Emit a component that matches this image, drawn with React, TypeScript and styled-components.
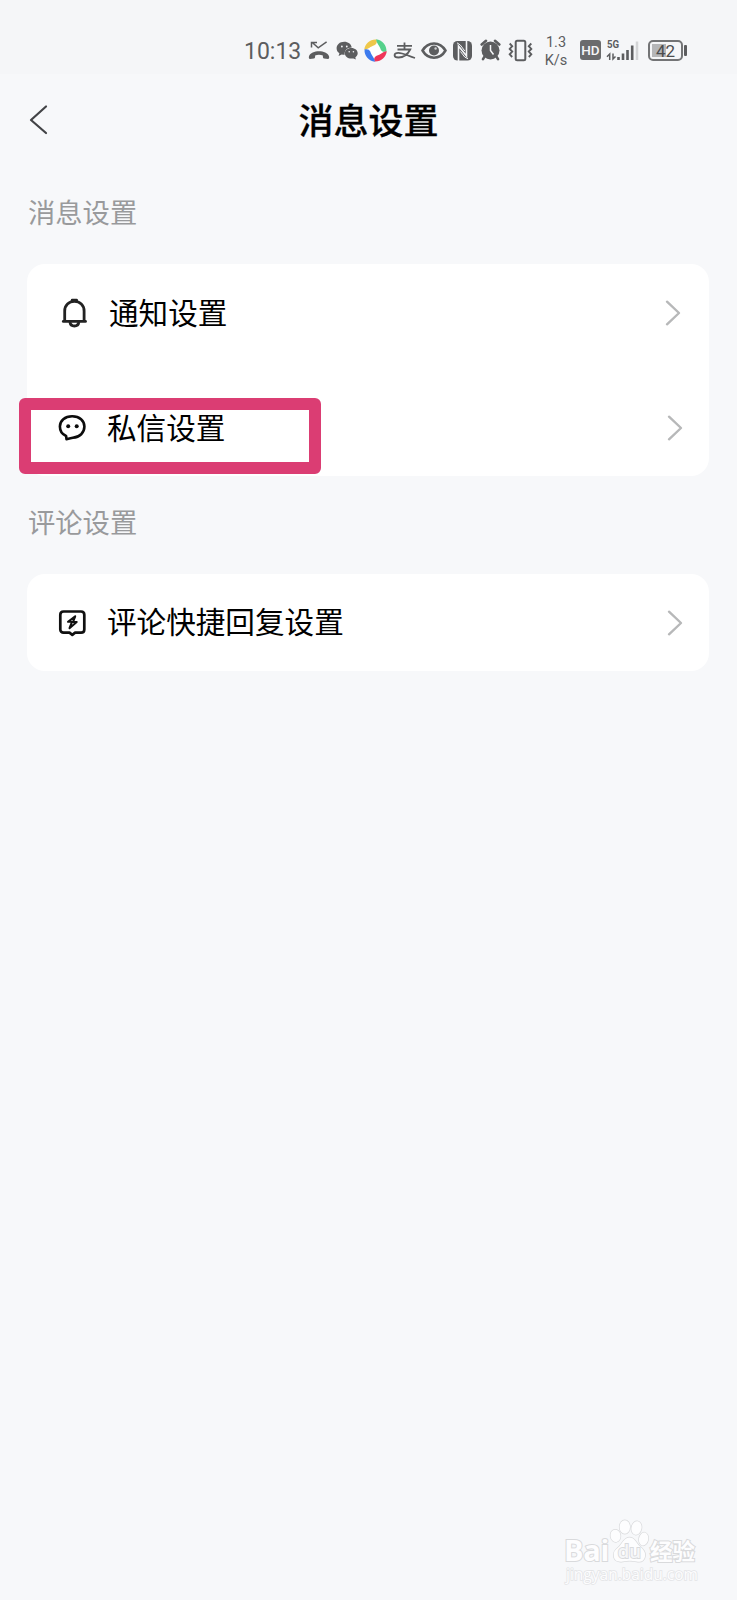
import React from 'react';
import styled, { createGlobalStyle } from 'styled-components';

const GlobalStyle = createGlobalStyle`
  * { box-sizing: border-box; }
  body {
    margin: 0;
    background: #f7f8fa;
    font-family: Roboto, "Noto Sans CJK SC", sans-serif;
    color: #000;
  }
`;

const Screen = styled.div`
  position: relative;
  width: 737px;
  height: 1600px;
  overflow: hidden;
  background: #f7f8fa;
`;

const StatusBar = styled.div`
  display: flex;
  align-items: flex-start;
  height: 74px;
  padding: 39px 0 0 244px;
  background: #f5f6f8;
  color: #5c5d5f;
`;

const Clock = styled.span`
  width: 57px;
  height: 24px;
  padding-top: 1px;
  font: 400 23px/24px Roboto, sans-serif;
  white-space: nowrap;
`;

const StatusIcon = styled.svg<{ $gap: number }>`
  display: block;
  flex: none;
  margin-left: ${(p) => p.$gap}px;
`;

const Speed = styled.span`
  width: 26px;
  margin: -5px 0 0 9px;
  font: 400 14.5px/18px Roboto, sans-serif;
  text-align: center;
`;

const HdBadge = styled.span`
  width: 21px;
  height: 20px;
  margin: 1px 0 0 11px;
  border-radius: 3px;
  background: #6a6b6d;
  color: #f5f6f8;
  font: 500 13.5px/20px Roboto, sans-serif;
  text-align: center;
`;

const Network = styled.div`
  position: relative;
  width: 34px;
  margin-left: 5px;
`;

const NetworkLabel = styled.span`
  position: absolute;
  top: 0;
  left: 1px;
  font: 700 11px/11px Roboto, sans-serif;
  transform: scaleX(0.88);
  transform-origin: left;
`;

const Battery = styled.div`
  position: relative;
  width: 35px;
  height: 21px;
  margin: 1px 0 0 8px;
  border: 2px solid #737476;
  border-radius: 5px;
  background: linear-gradient(90deg, #b5b6b8 14px, transparent 14px) 2px 2px / 27px 13px no-repeat;
  font: 400 17px/18px Roboto, sans-serif;
  text-align: center;
  color: #4c4d4f;

  &::after {
    content: '';
    position: absolute;
    top: 3px;
    right: -6px;
    width: 3px;
    height: 11px;
    border-radius: 1px;
    background: #5c5d5f;
  }
`;

const Header = styled.header`
  display: grid;
  grid-template-columns: 58px 1fr 58px;
  align-items: center;
  height: 92px;
`;

const BackButton = styled.button`
  display: flex;
  padding: 0 0 0 27px;
  border: 0;
  background: none;
`;

const Title = styled.h1`
  margin: 0;
  padding-bottom: 3px;
  font: 500 35px/48px "Noto Sans CJK SC", sans-serif;
  -webkit-text-stroke: 0.3px #000;
  text-align: center;
`;

const SectionTitle = styled.h2`
  margin: 0;
  padding: 25px 0 33px 28px;
  font: 400 27.3px/40px "Noto Sans CJK SC", sans-serif;
  color: #999a9c;
`;

const Card = styled.section`
  display: flex;
  flex-direction: column;
  gap: 18px;
  margin: 0 28px 0 27px;
  border-radius: 18px;
  background: #fff;
`;

const Row = styled.div<{ $height: number; $inset?: number }>`
  display: flex;
  align-items: center;
  height: ${(p) => p.$height}px;
  padding: 0 ${(p) => 25.5 + (p.$inset ?? 0)}px 0 ${(p) => 29.5 + (p.$inset ?? 0)}px;
`;

const RowLabel = styled.span`
  flex: 1;
  margin: 0 0 3px 20.5px;
  font: 400 29.6px/44px "Noto Sans CJK SC", sans-serif;
`;

const Highlight = styled.div`
  position: absolute;
  top: 398px;
  left: 19px;
  width: 302px;
  height: 75.5px;
  border: 12px solid #db3d73;
  border-radius: 6px;
`;

const Watermark = styled.div`
  position: absolute;
  left: 564px;
  top: 1519px;
  width: 136px;
  height: 68px;
  color: #fdfdfe;
  -webkit-text-stroke: 2px #d9dadc;
  paint-order: stroke fill;
`;

const Brand = styled.div`
  display: flex;
  align-items: flex-end;
  height: 44px;
`;

const BrandLatin = styled.span`
  width: 45px;
  margin-bottom: -1px;
  font: 700 29px/28px "Open Sans", sans-serif;
  letter-spacing: -0.3px;
`;

const BrandHan = styled.span`
  margin: 0 0 1px 1px;
  font: 700 22.5px/24px "Noto Sans CJK SC", sans-serif;
  white-space: nowrap;
`;

const Domain = styled.div`
  margin: 2px 0 0 2px;
  font: 400 15.5px/18px "Open Sans", sans-serif;
  -webkit-text-stroke-width: 1.5px;
  -webkit-text-stroke-color: #e3e4e6;
`;

const Chevron = () => (
  <svg width="18" height="28" viewBox="0 0 18 28" fill="none" stroke="#b7b8b9" strokeWidth="2.4" strokeLinecap="round" strokeLinejoin="round">
    <path d="M3 2.700 15 14 3 25.300" />
  </svg>
);

const BellIcon = () => (
  <svg width="30" height="32" viewBox="0 0 30 32" fill="none" stroke="#222" strokeWidth="2.8" strokeLinejoin="round">
    <path d="M5.700 24V14C5.700 8.200 9.900 4.400 15.400 4.400s9.700 3.800 9.700 9.600v10" />
    <path d="M4.300 24.400h22.200" strokeLinecap="round" />
    <path d="M13.200 3.200h4.400" strokeLinecap="round" />
    <path d="M10.900 25c.4 2.700 2.100 4 4.500 4s4.100-1.300 4.500-4" />
  </svg>
);

const ChatIcon = () => (
  <svg width="30" height="32" viewBox="0 0 30 32" fill="none" stroke="#0c0c0c" strokeWidth="2.600" strokeLinejoin="round">
    <path d="M15.200 4.300c7.400 0 12.200 4.300 12.200 10.300S22.800 25.200 15.800 25.800c-2.200.4-4.200.9-6.300 1.400l-.4-3.200C5.200 22.400 2.900 18.700 2.900 14.600c0-6 4.900-10.300 12.300-10.300Z" />
    <circle cx="11.200" cy="14.200" r="2" fill="#0c0c0c" stroke="none" />
    <circle cx="19.700" cy="14.200" r="2" fill="#0c0c0c" stroke="none" />
  </svg>
);

const QuickReplyIcon = () => (
  <svg width="30" height="32" viewBox="0 0 30 32" fill="none" stroke="#101010" strokeWidth="2.700" strokeLinejoin="round">
    <path d="M6.600 4.500h17.400c2 0 3.300 1.200 3.300 3.200v14.800c0 2-1.300 3.200-3.300 3.200h-5.900l-2.800 2.100-2.800-2.100H6.600c-2 0-3.300-1.200-3.300-3.200V7.700c0-2 1.300-3.200 3.300-3.200Z" />
    <path d="M18.200 9.300 11 14.800h4l-2.500 6.400 7.200-6.200h-3.600Z" strokeWidth="2" />
  </svg>
);

const BackIcon = () => (
  <svg width="22" height="32" viewBox="0 0 22 32" fill="none" stroke="#424346" strokeWidth="2.200" strokeLinecap="round" strokeLinejoin="round">
    <path d="M19 2.500 4 16l15 13" />
  </svg>
);

const BLADE = 'M.6 8.500C2.500 3 8.500-.8 14.800 1c.2 2.900-.9 4.700-3.300 5.200C7.600 6.400 4 9.300.6 8.500Z';
const BLADE_COLORS = ['#efc84b', '#55d18b', '#ef3559', '#3d7bee'];

const StatusIcons = () => (
  <>
    <StatusIcon $gap={7} width="22" height="22" viewBox="0 0 22 22">
      <path d="m4 3.300 6.200 5.500 8.400-6M3.500 8.500v-5H9" fill="none" stroke="currentColor" strokeWidth="1.500" />
      <path d="M1 17.200c2.300-6.500 17.700-6.500 20 0 .4 1.300.2 2.700-1 2.900l-3.900-.7c-1.200-.2-1.300-1.500-1.200-3-2.400-.8-5.400-.8-7.800 0 .1 1.500 0 2.800-1.200 3L2 20.100c-1.200-.2-1.400-1.600-1-2.900Z" fill="currentColor" />
    </StatusIcon>
    <StatusIcon $gap={6} width="22" height="22" viewBox="0 0 22 22" fill="currentColor">
      <path d="M8.300 2.700C3.700 2.700.6 5.600.6 9.300c0 2.100 1 3.900 2.800 5l-.8 2.700 3.100-1.600c1 .3 1.800.4 3 .4-.7-4.300 2.400-7.400 7.100-7.400C15 4.900 12.200 2.700 8.300 2.700Z" />
      <path d="M15.300 9c-3.700 0-6.500 2.300-6.500 5.300s2.800 5.300 6.500 5.300l2.100-.2 2.500 1.200-.6-2.200c1.400-1 2.400-2.400 2.400-4.100C21.700 11.300 19.100 9 15.300 9Z" />
      <g fill="#f5f6f8"><circle cx="5.900" cy="7.500" r=".9" /><circle cx="10.800" cy="7.500" r=".9" /><circle cx="13.200" cy="12.800" r=".8" /><circle cx="17.400" cy="12.800" r=".8" /></g>
    </StatusIcon>
    <StatusIcon $gap={6} width="23" height="23" viewBox="0 0 23 23">
      <circle cx="11.500" cy="11.500" r="10" fill="#fff" />
      {BLADE_COLORS.map((color, i) => (
        <path key={color} d={BLADE} fill={color} transform={`rotate(${i * 90 - 12} 11.500 11.500)`} />
      ))}
    </StatusIcon>
    <StatusIcon $gap={6} width="23" height="22" viewBox="0 0 23 22" fill="none" stroke="currentColor" strokeWidth="1.800">
      <path d="M4 6.800h15M11.500 3.500v7M4.500 10.500h12.700c-2.200 4.300-6.700 8-11.700 8-5.200 0-5.200-4.700-.2-4.700 5 0 9.200 3 16.700 5.200" />
    </StatusIcon>
    <StatusIcon $gap={5} width="26" height="24" viewBox="0 0 26 24">
      <path d="M1.500 11.500C7 2 19 2 24.500 11.500 19 21 7 21 1.500 11.500Z" fill="none" stroke="currentColor" strokeWidth="2.500" />
      <circle cx="13" cy="11.500" r="5" fill="currentColor" /><circle cx="14.600" cy="9.500" r="1.200" fill="#cfd0d2" />
    </StatusIcon>
    <StatusIcon $gap={6} width="19" height="24" viewBox="0 0 19 24">
      <rect y="2" width="19" height="19.500" rx="4.500" fill="currentColor" />
      <path d="M5.500 22V7l8 10V2" fill="none" stroke="#f5f6f8" strokeWidth="1.600" />
      <path d="M4 3.800 7.300 6l4.500 6M15 19.800 11.700 18 7.500 12.500" fill="none" stroke="#f5f6f8" strokeWidth="1" />
    </StatusIcon>
    <StatusIcon $gap={8} width="21" height="24" viewBox="0 0 21 24">
      <circle cx="10.500" cy="11.500" r="9" fill="currentColor" />
      <path d="M1.700 5.500 6 1.800M15 1.800 19.300 5.500M4.500 17.700 3 20.200M16.500 17.700l1.500 2.500" stroke="currentColor" strokeWidth="2.600" strokeLinecap="round" />
      <path d="M10.500 6v5.500l3 4" fill="none" stroke="#f5f6f8" strokeWidth="1.500" />
    </StatusIcon>
    <StatusIcon $gap={7} width="26" height="24" viewBox="0 0 26 24" fill="none" stroke="currentColor">
      <rect x="7.700" y="1.700" width="9.600" height="19.600" rx="1.500" strokeWidth="2" />
      <path d="m1.700 4.500 2.500 2.700-2.500 2.700 2.500 2.700-2.500 2.700 2.500 2.700M23.300 4.500l-2.500 2.700 2.500 2.700-2.500 2.700 2.500 2.700-2.500 2.700" strokeWidth="1.900" />
    </StatusIcon>
  </>
);

const Signal = () => (
  <svg width="34" height="24" viewBox="0 0 34 24">
    <path d="M3.700 21v-6L1 17.800M7 14.500V20l2.500-2.500" fill="none" stroke="currentColor" strokeWidth="1.500" />
    <path d="M12.500 18V21M17 14.500V21M21.500 11V21M26.200 6.500V21" stroke="currentColor" strokeWidth="2.600" />
    <path d="M31 2.500V21" stroke="#d3d4d6" strokeWidth="2.500" />
  </svg>
);

const Paw = () => (
  <svg width="40" height="46" viewBox="0 0 40 46" fill="#fdfdfe" stroke="#d9dadc" strokeWidth="1.400">
    <ellipse cx="6.500" cy="18.800" rx="5" ry="6.200" transform="rotate(-10 6.500 18.800)" />
    <ellipse cx="15.800" cy="10" rx="5.200" ry="6.800" />
    <ellipse cx="27.500" cy="11" rx="5" ry="6.800" transform="rotate(12 27.500 11)" />
    <ellipse cx="34.600" cy="22" rx="4.600" ry="6.500" transform="rotate(10 34.600 22)" />
    <path d="M20.500 20.500c5 0 6.500 5 10 8.500 4 3.500 6.200 6 5.500 10.500-1 5.500-5.300 5.500-8.300 5-6-1-8-1-14 0-4.500.7-9-.5-9-6.500 0-4.500 2.500-5.500 5.500-8.500 3.500-3.500 5-9 10.300-9Z" />
    <text x="20.300" y="40.500" fontFamily="Open Sans" fontSize="18.500" fontWeight="600" textAnchor="middle" fill="#f5f6f8" strokeWidth="1.800">du</text>
  </svg>
);

export default function App() {
  return (
    <Screen>
      <GlobalStyle />
      <StatusBar>
        <Clock>10:13</Clock>
        <StatusIcons />
        <Speed>1.3 K/s</Speed>
        <HdBadge>HD</HdBadge>
        <Network>
          <NetworkLabel>5G</NetworkLabel>
          <Signal />
        </Network>
        <Battery>42</Battery>
      </StatusBar>
      <Header>
        <BackButton aria-label="返回"><BackIcon /></BackButton>
        <Title>消息设置</Title>
      </Header>
      <SectionTitle>消息设置</SectionTitle>
      <Card>
        <Row $height={98} $inset={2}><BellIcon /><RowLabel>通知设置</RowLabel><Chevron /></Row>
        <Row $height={96}><ChatIcon /><RowLabel>私信设置</RowLabel><Chevron /></Row>
      </Card>
      <SectionTitle>评论设置</SectionTitle>
      <Card>
        <Row $height={97}><QuickReplyIcon /><RowLabel>评论快捷回复设置</RowLabel><Chevron /></Row>
      </Card>
      <Highlight />
      <Watermark>
        <Brand>
          <BrandLatin>Bai</BrandLatin>
          <Paw />
          <BrandHan>经验</BrandHan>
        </Brand>
        <Domain>jingyan.baidu.com</Domain>
      </Watermark>
    </Screen>
  );
}
